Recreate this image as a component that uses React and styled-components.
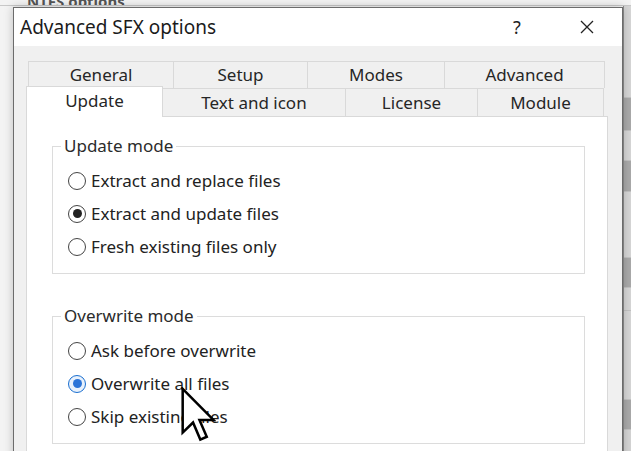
import React from 'react'
import styled, { createGlobalStyle } from 'styled-components'

const GlobalStyle = createGlobalStyle`
  html, body {
    margin: 0;
    padding: 0;
  }
  body {
    width: 631px;
    height: 451px;
    overflow: hidden;
    background: #f3f3f3;
    font-family: "Noto Sans", "Open Sans", sans-serif;
  }
  * {
    box-sizing: border-box;
  }
`

const Desktop = styled.div`
  position: relative;
  width: 631px;
  height: 451px;
  overflow: hidden;
  background: #f3f3f3;
  display: flex;
  flex-direction: column;
`

const BackHeader = styled.div`
  height: 6px;
  border-bottom: 1px solid #c8c8c8;
  overflow: hidden;
  display: flex;
  align-items: flex-end;
  padding-left: 27px;
`

const BackText = styled.span`
  font-size: 15px;
  font-weight: 700;
  line-height: 15px;
  color: #555;
  margin-bottom: -4px;
`

const BackBody = styled.div`
  flex: 1;
  display: flex;
  justify-content: flex-end;
`

const BackList = styled.div`
  width: 8px;
  display: flex;
  flex-direction: column;
  background: #d4d4d4;
  border-left: 1px solid #8d8d8d;
`

const BackRow = styled.div`
  height: ${p => p.h}px;
  background: ${p => (p.dark ? '#a9a9a9' : '#d6d6d6')};
  border-bottom: 1px solid #c2c2c2;
`

const Window = styled.div`
  position: absolute;
  left: 13px;
  top: 7px;
  width: 610px;
  height: 470px;
  border: 1px solid #6c6c6c;
  background: #f0f0f0;
  box-shadow: 0 0 9px rgba(0, 0, 0, 0.22);
  display: flex;
  flex-direction: column;
`

const TitleBar = styled.div`
  height: 38px;
  background: #ffffff;
  display: flex;
  align-items: center;
  padding-left: 6px;
`

const Title = styled.div`
  flex: 1;
  font-size: 19px;
  color: #1b1b1b;
  padding-bottom: 1px;
`

const CaptionButton = styled.div`
  width: 70px;
  height: 38px;
  display: flex;
  align-items: center;
  justify-content: center;
  font-size: 18px;
  color: #1e1e1e;
`

const Body = styled.div`
  flex: 1;
  padding: 15px 14px 0 12px;
  display: flex;
  flex-direction: column;
`

const TabRow = styled.div`
  display: flex;
  align-items: flex-end;
  height: ${p => p.h}px;
  padding-left: ${p => p.offset}px;
`

const Tab = styled.div`
  width: ${p => p.w}px;
  height: ${p => (p.active ? p.h + 3 : p.h)}px;
  margin-left: -1px;
  margin-bottom: ${p => (p.active ? -1 : 0)}px;
  position: relative;
  z-index: ${p => (p.active ? 2 : 1)};
  background: ${p => (p.active ? '#ffffff' : '#f0f0f0')};
  border: 1px solid #d9d9d9;
  border-bottom: none;
  display: flex;
  align-items: center;
  justify-content: center;
  padding-bottom: ${p => (p.active ? 3 : 1)}px;
  font-size: 17px;
  color: #262626;
  &:first-child {
    margin-left: 0;
  }
`

const Panel = styled.div`
  flex: 1;
  background: #ffffff;
  border: 1px solid #d9d9d9;
  padding: 18px 22px 0 25px;
  display: flex;
  flex-direction: column;
  gap: 31px;
`

const Group = styled.fieldset`
  margin: 0;
  border: 1px solid #dcdcdc;
  padding: 7px 0 10px 15px;
  display: flex;
  flex-direction: column;
`

const Legend = styled.legend`
  margin-left: -7px;
  padding: 0 3px;
  font-size: 17px;
  line-height: 22px;
  color: #2b2b2b;
`

const Option = styled.label`
  height: 33px;
  display: flex;
  align-items: center;
  gap: 5px;
  font-size: 17px;
  color: #222;
`

const Circle = styled.span`
  width: 18px;
  height: 18px;
  border-radius: 50%;
  border: 1.5px solid ${p => (p.accent ? '#1a6fd0' : '#444')};
  background: ${p => (p.accent ? '#e8f1fc' : '#ffffff')};
  display: flex;
  align-items: center;
  justify-content: center;
  flex-shrink: 0;
  &::after {
    content: '';
    width: 9px;
    height: 9px;
    border-radius: 50%;
    background: ${p => (p.accent ? '#2b74d8' : '#222')};
    display: ${p => (p.checked ? 'block' : 'none')};
  }
`

const Cursor = styled.svg`
  position: absolute;
  left: 181px;
  top: 387px;
  z-index: 10;
`

const tabsBack = [
  { label: 'General', w: 146 },
  { label: 'Setup', w: 135 },
  { label: 'Modes', w: 138 },
  { label: 'Advanced', w: 161 },
]

const tabsFront = [
  { label: 'Update', w: 137, active: true },
  { label: 'Text and icon', w: 184 },
  { label: 'License', w: 133 },
  { label: 'Module', w: 127 },
]

const groups = [
  {
    title: 'Update mode',
    accent: false,
    options: ['Extract and replace files', 'Extract and update files', 'Fresh existing files only'],
    checked: 1,
  },
  {
    title: 'Overwrite mode',
    accent: true,
    options: ['Ask before overwrite', 'Overwrite all files', 'Skip existing files'],
    checked: 1,
  },
]

const backRows = [
  { h: 92 }, { h: 33, dark: true }, { h: 30 }, { h: 31, dark: true },
  { h: 66 }, { h: 30, dark: true }, { h: 23 }, { h: 89 }, { h: 30, dark: true },
]

const App = () => {
  return (
    <Desktop>
      <GlobalStyle />
      <BackHeader>
        <BackText>NTFS options</BackText>
      </BackHeader>
      <BackBody>
        <BackList>
          {backRows.map((r, i) => (
            <BackRow key={i} h={r.h} dark={r.dark} />
          ))}
        </BackList>
      </BackBody>

      <Window>
        <TitleBar>
          <Title>Advanced SFX options</Title>
          <CaptionButton>?</CaptionButton>
          <CaptionButton>
            <svg width="14" height="14" viewBox="0 0 14 14">
              <path d="M1 1 L13 13 M13 1 L1 13" stroke="#222" strokeWidth="1.3" fill="none" />
            </svg>
          </CaptionButton>
        </TitleBar>
        <Body>
          <TabRow h={27} offset={2}>
            {tabsBack.map(t => (
              <Tab key={t.label} w={t.w} h={27}>{t.label}</Tab>
            ))}
          </TabRow>
          <TabRow h={28} offset={0}>
            {tabsFront.map(t => (
              <Tab key={t.label} w={t.w} h={28} active={t.active}>{t.label}</Tab>
            ))}
          </TabRow>
          <Panel>
            {groups.map(g => (
              <Group key={g.title}>
                <Legend>{g.title}</Legend>
                {g.options.map((o, i) => (
                  <Option key={o}>
                    <Circle checked={i === g.checked} accent={g.accent && i === g.checked} />
                    {o}
                  </Option>
                ))}
              </Group>
            ))}
          </Panel>
        </Body>
      </Window>

      <Cursor width="35" height="55" viewBox="0 0 12.5 19.5">
        <path
          d="M0.6 0.6 L0.6 16.2 L4.3 12.6 L6.9 18.7 L9.2 17.7 L6.6 11.7 L11.6 11.7 Z"
          fill="#ffffff"
          stroke="#000000"
          strokeWidth="0.9"
          strokeLinejoin="miter"
        />
      </Cursor>
    </Desktop>
  )
}

export default App
